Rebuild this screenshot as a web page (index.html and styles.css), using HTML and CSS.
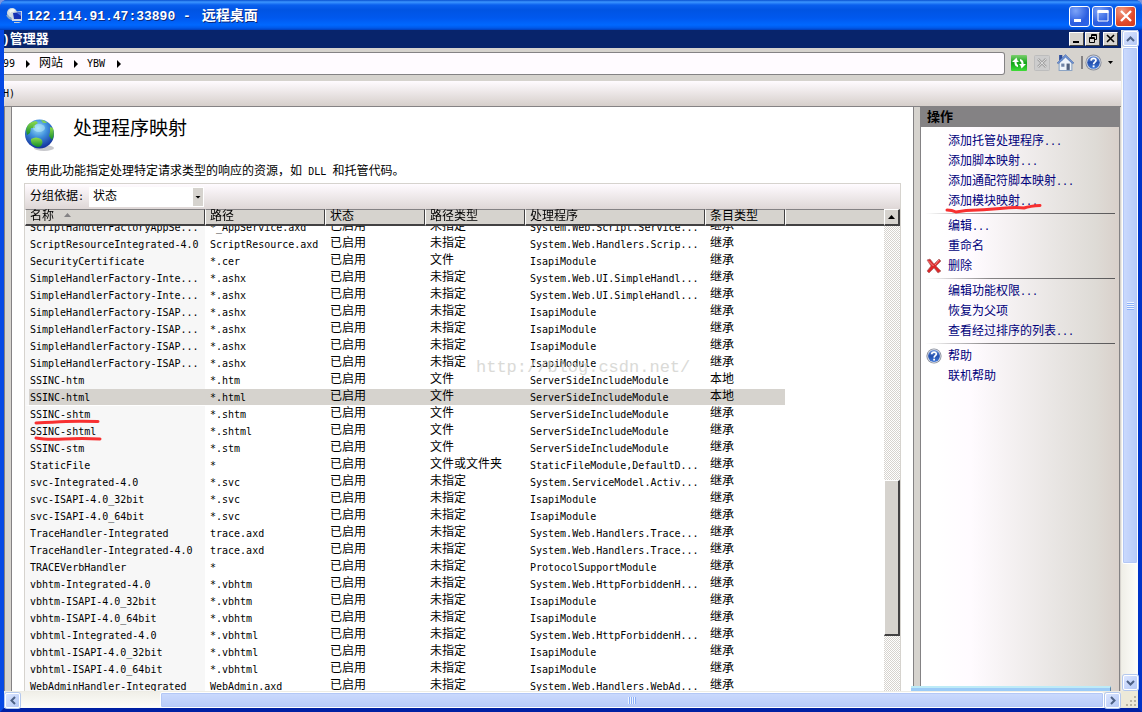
FILE: index.html
```html
<!DOCTYPE html>
<html lang="zh-CN">
<head>
<meta charset="utf-8">
<title>122.114.91.47:33890 - 远程桌面</title>
<link rel="stylesheet" href="styles.css">
</head>
<body>
<svg class="defs" width="0" height="0" aria-hidden="true">
  <defs>
    <radialGradient id="globeFill" cx="0.45" cy="0.3" r="0.7"><stop offset="0" stop-color="#9fe2f8"/><stop offset="0.45" stop-color="#3f8fdc"/><stop offset="1" stop-color="#12309c"/></radialGradient>
    <linearGradient id="landFill" x1="0" y1="0" x2="0" y2="1"><stop offset="0" stop-color="#8fdc4e"/><stop offset="1" stop-color="#128c28"/></linearGradient>
    <linearGradient id="helpFill" x1="0" y1="0" x2="0" y2="1"><stop offset="0" stop-color="#6d94dc"/><stop offset="0.5" stop-color="#2450ae"/><stop offset="1" stop-color="#3f78d8"/></linearGradient>
    <linearGradient id="goFill" x1="0" y1="0" x2="0" y2="1"><stop offset="0" stop-color="#7ccf6e"/><stop offset="0.5" stop-color="#12a418"/><stop offset="1" stop-color="#3fdc38"/></linearGradient>
    <symbol id="help" viewBox="0 0 16 16"><circle cx="8" cy="8" r="7.6" fill="#8a8f9c"/><circle cx="8" cy="8" r="6.7" fill="#dfe3ec"/><circle cx="8" cy="8" r="5.9" fill="url(#helpFill)"/><path d="M5.7 6.2C5.9 3.4 10.4 3.5 10.3 6.1C10.2 7.7 8.2 7.7 8.1 9.6" fill="none" stroke="#fff" stroke-width="1.7"/><rect x="7.2" y="10.7" width="1.8" height="1.8" fill="#fff"/></symbol>
  </defs>
</svg>
<div class="window">
  <header class="titlebar">
    <svg class="rdp" width="18" height="18" viewBox="0 0 18 18" aria-hidden="true"><circle cx="6" cy="6" r="5" fill="#d4dce0"/><path d="M3 4Q6 0 9 3L6 8Z" fill="#f4f8f6"/><path d="M1 8Q4 13 8 12" fill="none" stroke="#87a7c4" stroke-width="2"/><path d="M5 5L16 4V14L6 14Z" fill="#cfd8e4"/><path d="M7 6L15 5V12L8 12Z" fill="#1632b4"/><path d="M11 6L15 5V9Z" fill="#4d78e8"/><path d="M8 15H13L15 16H8Z" fill="#c3ccd6"/></svg>
    <h1 class="title">122.114.91.47:33890 - <span class="title-zh">远程桌面</span></h1>
    <div class="controls">
      <button class="xp" aria-label="最小化"><svg width="20" height="20" viewBox="0 0 20 20"><rect x="4" y="13" width="7" height="3" fill="#fff"/></svg></button>
      <button class="xp" aria-label="最大化"><svg width="20" height="20" viewBox="0 0 20 20"><path d="M5 5H15V15H5Z" fill="none" stroke="#fff"/><rect x="4.500" y="4" width="11" height="3" fill="#fff"/></svg></button>
      <button class="xp close" aria-label="关闭"><svg width="20" height="20" viewBox="0 0 20 20"><path d="M5 5L15 15M15 5L5 15" stroke="#fff" stroke-width="2.300"/></svg></button>
    </div>
  </header>
  <div class="viewport">
    <div class="remote">
      <div class="apptitle">
        <h2 class="appname">)管理器</h2>
        <div class="appbtns">
          <button class="classic" aria-label="最小化"><svg width="14" height="12"><rect x="3" y="8" width="6" height="2"/></svg></button>
          <button class="classic" aria-label="还原"><svg width="14" height="12"><path d="M5.500 4V1.500H10.500V6.500H9M5 2.500H11M3.500 4.500H8.500V9.500H3.500ZM3 5.500H9" fill="none" stroke="#000"/></svg></button>
          <button class="classic last" aria-label="关闭"><svg width="14" height="12"><path d="M3 2L10 9M10 2L3 9" stroke="#000" stroke-width="1.600"/></svg></button>
        </div>
      </div>
      <div class="addressrow">
        <nav class="address"><span class="lat">99</span><i class="crumb"></i><a href="#">网站</a><i class="crumb"></i><a href="#" class="lat">YBW</a><i class="crumb"></i></nav>
        <div class="tools">
          <button class="tool" aria-label="刷新"><svg width="16" height="16" viewBox="0 0 16 16"><rect width="16" height="16" rx="1" fill="url(#goFill)"/><path d="M5.500 2.500L1 7H3.500V8.500Q4 11.500 7 12V10Q5.500 9.500 5.500 7H8L6.500 5.500ZM10.500 13.500L15 9H12.500V7.500Q12 4.500 9 4V6Q10.500 6.500 10.500 9H8L9.500 10.500Z" fill="#fff"/></svg></button>
          <button class="tool" aria-label="停止" disabled><svg width="16" height="16" viewBox="0 0 16 16"><rect x=".5" y=".5" width="15" height="15" rx="1" fill="#cdcdcd" stroke="#bdbdbd"/><path d="M4 4L12 12M12 4L4 12" stroke="#a5a5a5" stroke-width="2.500"/><path d="M4 4L12 12M12 4L4 12" stroke="#d8d8d8"/></svg></button>
          <button class="tool" aria-label="主页"><svg width="17" height="17" viewBox="0 0 16 16"><path d="M2 8L8 2L14 8V15.500H2Z" fill="#eef3fa" stroke="#8ca4c4"/><path d="M2 1H5V6H2Z" fill="#2b4d9e"/><path d="M0 8.500L8 .5L16 8.500L14.500 9L8 3L1.500 9Z" fill="#6f94d4" stroke="#4568a8" stroke-width=".5"/><rect x="4" y="9" width="3" height="3" fill="#6f83a6"/><rect x="9" y="9" width="3" height="6" fill="#52617e"/></svg></button>
          <i class="toolsep"></i>
          <button class="tool help" aria-label="帮助"><svg width="17" height="17"><use href="#help"/></svg><svg class="caret" width="5" height="3"><path d="M0 0H5L2.500 3Z"/></svg></button>
        </div>
      </div>
      <div class="menubar"><button class="menu"><span class="lat">H)</span></button></div>
      <div class="panes">
        <div class="treeedge"></div>
        <main class="feature">
          <div class="heading">
            <svg width="32" height="34" viewBox="0 0 32 34" aria-hidden="true"><ellipse cx="20" cy="30" rx="10" ry="3" fill="#c8c8cc"/><circle cx="15.500" cy="16" r="14.500" fill="url(#globeFill)"/><path d="M2 12Q3 4 12 3L14 5L11 7L11 10L7 10L6 15L3 17Z" fill="url(#landFill)"/><path d="M7 21Q12 18 17 21Q20 24 17 28Q14 30 11 28Q6 26 7 21Z" fill="url(#landFill)"/><path d="M26 9L29 10Q31 17 28 22L25 18L26 14Z" fill="url(#landFill)"/><path d="M17 2Q21 2 23 5L19 5Z" fill="#7fd05c"/><ellipse cx="15" cy="10" rx="6" ry="4" fill="#c8f2ff" opacity=".45"/></svg>
            <h2>处理程序映射</h2>
          </div>
          <p class="intro">使用此功能指定处理特定请求类型的响应的资源，如 <span class="lat">DLL</span> 和托管代码。</p>
          <div class="listbox">
            <div class="groupbar">
              <label for="group">分组依据<span class="lat">:</span></label>
              <span class="picker"><select id="group"><option>状态</option></select><svg class="pickarrow" width="10" height="18"><path d="M2.500 8H7.500L5 10.500Z"/></svg></span>
            </div>
            <div class="listbody">
              <div class="rows" id="rows">
                <table>
                  <colgroup><col class="c-name"><col class="c-path"><col class="c-state"><col class="c-state"><col class="c-name"><col class="c-kind"><col></colgroup>
                  <thead><tr><th>名称<svg class="sort" width="7" height="4"><path d="M3.500 0L7 4H0Z" fill="#848284"/></svg></th><th>路径</th><th>状态</th><th>路径类型</th><th>处理程序</th><th>条目类型</th><th></th></tr></thead>
                  <tbody>
                    <tr><td>ScriptHandlerFactoryAppSe...</td><td>*_AppService.axd</td><td>已启用</td><td>未指定</td><td>System.Web.Script.Service...</td><td>继承</td><td></td></tr>
                    <tr><td>ScriptResourceIntegrated-4.0</td><td>ScriptResource.axd</td><td>已启用</td><td>未指定</td><td>System.Web.Handlers.Scrip...</td><td>继承</td><td></td></tr>
                    <tr><td>SecurityCertificate</td><td>*.cer</td><td>已启用</td><td>文件</td><td>IsapiModule</td><td>继承</td><td></td></tr>
                    <tr><td>SimpleHandlerFactory-Inte...</td><td>*.ashx</td><td>已启用</td><td>未指定</td><td>System.Web.UI.SimpleHandl...</td><td>继承</td><td></td></tr>
                    <tr><td>SimpleHandlerFactory-Inte...</td><td>*.ashx</td><td>已启用</td><td>未指定</td><td>System.Web.UI.SimpleHandl...</td><td>继承</td><td></td></tr>
                    <tr><td>SimpleHandlerFactory-ISAP...</td><td>*.ashx</td><td>已启用</td><td>未指定</td><td>IsapiModule</td><td>继承</td><td></td></tr>
                    <tr><td>SimpleHandlerFactory-ISAP...</td><td>*.ashx</td><td>已启用</td><td>未指定</td><td>IsapiModule</td><td>继承</td><td></td></tr>
                    <tr><td>SimpleHandlerFactory-ISAP...</td><td>*.ashx</td><td>已启用</td><td>未指定</td><td>IsapiModule</td><td>继承</td><td></td></tr>
                    <tr><td>SimpleHandlerFactory-ISAP...</td><td>*.ashx</td><td>已启用</td><td>未指定</td><td>IsapiModule</td><td>继承</td><td></td></tr>
                    <tr><td>SSINC-htm</td><td>*.htm</td><td>已启用</td><td>文件</td><td>ServerSideIncludeModule</td><td>本地</td><td></td></tr>
                    <tr class="selected"><td>SSINC-html</td><td>*.html</td><td>已启用</td><td>文件</td><td>ServerSideIncludeModule</td><td>本地</td><td></td></tr>
                    <tr><td><span class="marked">SSINC-shtm<svg class="mark" width="68" height="6"><path d="M2 4Q20 3 32 2.500T64 2.500" fill="none" stroke="#f83030" stroke-width="3" stroke-linecap="round"/></svg></span></td><td>*.shtm</td><td>已启用</td><td>文件</td><td>ServerSideIncludeModule</td><td>继承</td><td></td></tr>
                    <tr><td><span class="marked">SSINC-shtml<svg class="mark" width="70" height="6"><path d="M2 2Q12 4 30 3T66 3" fill="none" stroke="#f83030" stroke-width="3" stroke-linecap="round"/></svg></span></td><td>*.shtml</td><td>已启用</td><td>文件</td><td>ServerSideIncludeModule</td><td>继承</td><td></td></tr>
                    <tr><td>SSINC-stm</td><td>*.stm</td><td>已启用</td><td>文件</td><td>ServerSideIncludeModule</td><td>继承</td><td></td></tr>
                    <tr><td>StaticFile</td><td>*</td><td>已启用</td><td>文件或文件夹</td><td>StaticFileModule,DefaultD...</td><td>继承</td><td></td></tr>
                    <tr><td>svc-Integrated-4.0</td><td>*.svc</td><td>已启用</td><td>未指定</td><td>System.ServiceModel.Activ...</td><td>继承</td><td></td></tr>
                    <tr><td>svc-ISAPI-4.0_32bit</td><td>*.svc</td><td>已启用</td><td>未指定</td><td>IsapiModule</td><td>继承</td><td></td></tr>
                    <tr><td>svc-ISAPI-4.0_64bit</td><td>*.svc</td><td>已启用</td><td>未指定</td><td>IsapiModule</td><td>继承</td><td></td></tr>
                    <tr><td>TraceHandler-Integrated</td><td>trace.axd</td><td>已启用</td><td>未指定</td><td>System.Web.Handlers.Trace...</td><td>继承</td><td></td></tr>
                    <tr><td>TraceHandler-Integrated-4.0</td><td>trace.axd</td><td>已启用</td><td>未指定</td><td>System.Web.Handlers.Trace...</td><td>继承</td><td></td></tr>
                    <tr><td>TRACEVerbHandler</td><td>*</td><td>已启用</td><td>未指定</td><td>ProtocolSupportModule</td><td>继承</td><td></td></tr>
                    <tr><td>vbhtm-Integrated-4.0</td><td>*.vbhtm</td><td>已启用</td><td>未指定</td><td>System.Web.HttpForbiddenH...</td><td>继承</td><td></td></tr>
                    <tr><td>vbhtm-ISAPI-4.0_32bit</td><td>*.vbhtm</td><td>已启用</td><td>未指定</td><td>IsapiModule</td><td>继承</td><td></td></tr>
                    <tr><td>vbhtm-ISAPI-4.0_64bit</td><td>*.vbhtm</td><td>已启用</td><td>未指定</td><td>IsapiModule</td><td>继承</td><td></td></tr>
                    <tr><td>vbhtml-Integrated-4.0</td><td>*.vbhtml</td><td>已启用</td><td>未指定</td><td>System.Web.HttpForbiddenH...</td><td>继承</td><td></td></tr>
                    <tr><td>vbhtml-ISAPI-4.0_32bit</td><td>*.vbhtml</td><td>已启用</td><td>未指定</td><td>IsapiModule</td><td>继承</td><td></td></tr>
                    <tr><td>vbhtml-ISAPI-4.0_64bit</td><td>*.vbhtml</td><td>已启用</td><td>未指定</td><td>IsapiModule</td><td>继承</td><td></td></tr>
                    <tr><td>WebAdminHandler-Integrated</td><td>WebAdmin.axd</td><td>已启用</td><td>未指定</td><td>System.Web.Handlers.WebAd...</td><td>继承</td><td></td></tr>
                  </tbody>
                </table>
              </div>
              <div class="listscroll">
                <button class="scrollup" aria-label="向上滚动"><svg width="7" height="4"><path d="M3.500 0L7 4H0Z"/></svg></button>
                <div class="trackabove"></div><div class="listthumb"></div><div class="trackbelow"></div>
              </div>
              <span class="watermark">http://blog.csdn.net/</span>
            </div>
          </div>
        </main>
        <div class="splitter"></div>
        <aside class="actions">
          <h3>操作</h3>
          <ul>
            <li><a href="#">添加托管处理程序<span class="lat">...</span></a></li>
            <li><a href="#">添加脚本映射<span class="lat">...</span></a></li>
            <li><a href="#">添加通配符脚本映射<span class="lat">...</span></a></li>
            <li><a href="#">添加模块映射<span class="lat">...</span></a><svg class="swoosh" width="100" height="12"><path d="M3 8Q8 8 12 10L22 8.500Q40 8 56 6.500T80 6Q86 4 96 3.500" fill="none" stroke="#f83030" stroke-width="3" stroke-linecap="round"/></svg></li>
          </ul>
          <hr>
          <ul>
            <li><a href="#">编辑<span class="lat">...</span></a></li>
            <li><a href="#">重命名</a></li>
            <li><svg class="actionicon" width="16" height="16" viewBox="0 0 16 16"><path d="M1 2L4 1L8 6L13 1L15 3L10 8L15 13L12 15L8 10L3 15L1 13L5 8Z" fill="#dc2828" stroke="#a06468" stroke-width=".6"/><path d="M2 2.500L7.500 8M13 2L9 7" stroke="#f88888"/></svg><a href="#">删除</a></li>
          </ul>
          <hr>
          <ul>
            <li><a href="#">编辑功能权限<span class="lat">...</span></a></li>
            <li><a href="#">恢复为父项</a></li>
            <li><a href="#">查看经过排序的列表<span class="lat">...</span></a></li>
          </ul>
          <hr>
          <ul>
            <li><svg class="actionicon" width="16" height="16"><use href="#help"/></svg><a href="#">帮助</a></li>
            <li><a href="#">联机帮助</a></li>
          </ul>
        </aside>
        <div class="ghost"></div>
      </div>
    </div>
    <div class="vscroll">
      <button class="sb" aria-label="向上"><svg width="9" height="6"><path d="M1 5L4.500 1.500L8 5" fill="none" stroke="#4d6185" stroke-width="2"/></svg></button>
      <div class="vthumb"><i class="vgrip"></i></div>
      <div class="vtrack"></div>
      <button class="sb" aria-label="向下"><svg width="9" height="6"><path d="M1 1L4.500 4.500L8 1" fill="none" stroke="#4d6185" stroke-width="2"/></svg></button>
    </div>
    <div class="hscroll">
      <button class="sb" aria-label="向左"><svg width="6" height="9"><path d="M5 1L1.500 4.500L5 8" fill="none" stroke="#4d6185" stroke-width="2"/></svg></button>
      <div class="htrack"></div>
      <div class="hthumb"><i class="hgrip"></i></div>
      <button class="sb" aria-label="向右"><svg width="6" height="9"><path d="M1 1L4.500 4.500L1 8" fill="none" stroke="#4d6185" stroke-width="2"/></svg></button>
    </div>
    <div class="corner"><svg width="12" height="12"><path d="M9 1h2v2h-2zM5 5h2v2h-2zM9 5h2v2h-2zM1 9h2v2h-2zM5 9h2v2h-2zM9 9h2v2h-2z" fill="#b8b4a3"/></svg></div>
  </div>
</div>
<script src="script.js"></script>
</body>
</html>
```

FILE: styles.css
```css
* { box-sizing: border-box; }
body { margin: 0; background: #7a96df; font: 12px/16px "Liberation Mono", "Noto Sans CJK SC", monospace; color: #000; }
h1, h2, h3, p, ul { margin: 0; padding: 0; }
ul { list-style: none; }
svg { display: block; flex: none; }
button { margin: 0; padding: 0; border: 0; font: inherit; color: inherit; display: flex; align-items: center; justify-content: center; flex: none; }
a { color: inherit; text-decoration: none; }
.defs { position: absolute; }
.lat { font-family: "DejaVu Sans Mono", monospace; font-size: 10px; }

.window { height: 100vh; display: flex; flex-direction: column; border-radius: 7px 7px 0 0; overflow: hidden; background: #0040dc; }
.titlebar { height: 30px; flex: none; display: flex; align-items: center; gap: 3px; padding: 2px 6px 0; background: linear-gradient(#0850d0 0, #3c96ff 2px, #0a60ee 5px, #0054e3 10px, #0058ee 18px, #0068ff 25px, #0058e8 28px, #003fbe 30px); }
.title { flex: 1; font: bold 13px/20px "Liberation Mono", "Noto Sans CJK SC", monospace; color: #fff; text-shadow: 1px 1px #0a2a80; white-space: pre; }
.title-zh { font-size: 14px; margin-left: 3px; }
.controls { display: flex; gap: 2px; }
.xp { width: 21px; height: 21px; border: 1px solid #fff; border-radius: 3px; background: radial-gradient(circle at 30% 20%, #7da4f8, #2c5ee0 60%, #2a66ec); }
.close { background: radial-gradient(circle at 30% 20%, #f09a80, #e0492a 60%, #cf3b1c); }

.viewport { flex: 1; min-height: 0; display: grid; grid-template-columns: minmax(0, 1fr) 17px; grid-template-rows: minmax(0, 1fr) 17px; border: solid; border-width: 0 4px 4px; border-color: #0040dc #0034c8 #0020a4 #0648e4; }
.remote { min-width: 0; min-height: 0; display: flex; flex-direction: column; background: #d6d3ce; overflow: hidden; }
.apptitle { height: 18px; flex: none; display: flex; justify-content: space-between; background: #08246b; padding-right: 3px; }
.appname { font-size: 13px; line-height: 19px; color: #fff; margin-left: -2px; }
.appbtns { display: flex; align-items: center; gap: 1px; }
.classic { width: 15px; height: 14px; background: #d6d3ce; border: 1px solid; border-color: #fff #404040 #404040 #fff; }
.classic.last { margin-left: 2px; }

.addressrow { height: 33px; flex: none; display: flex; align-items: center; padding-bottom: 2px; }
.address { flex: 1; height: 23px; display: flex; align-items: center; background: #fffbff; border: 1px solid #848284; border-left: 0; border-radius: 0 3px 3px 0; overflow: hidden; }
.address .lat:first-child { margin-left: -1px; }
.crumb { margin: 0 9px 0 11px; border: solid transparent; border-width: 4px 0 4px 4px; border-left-color: #000; }
.crumb:last-child { margin-left: 12px; }
.tools { display: flex; align-items: center; gap: 7px; padding: 0 8px 2px 6px; }
.tool { background: none; }
.toolsep { width: 2px; height: 13px; background: #848284; }
.help { gap: 6px; margin-left: -5px; }
.menubar { height: 25px; flex: none; display: flex; align-items: center; background: linear-gradient(#fffbff, #d6cfcb); }
.menu { background: none; margin-left: -1px; }

.panes { flex: 1; min-height: 0; position: relative; display: flex; border-top: 1px solid #848284; }
.treeedge { width: 8px; flex: none; border: solid #848284; border-width: 0 1px; }
.feature { flex: 1; min-width: 0; display: flex; flex-direction: column; background: #fff; padding: 11px 12px 0; }
.heading { display: flex; gap: 17px; }
.heading h2 { font-size: 19px; line-height: 24px; font-weight: 400; }
.intro { margin: 11px 2px 2px; line-height: 18px; white-space: nowrap; }
.intro .lat { margin: 0 -1px; }
.listbox { flex: 1; min-height: 0; display: flex; flex-direction: column; border: solid #d6d3ce; border-width: 1px 1px 0; }
.groupbar { height: 25px; flex: none; display: flex; align-items: center; gap: 1px; padding-left: 5px; background: linear-gradient(#fffbff, #ded7d6); }
.picker { position: relative; width: 115px; height: 20px; background: #fff; border: 1px solid #fff; margin-left: 4px; }
.picker select { appearance: none; width: 100%; height: 18px; border: 0; background: transparent; padding: 0 3px; font: inherit; color: inherit; }
.pickarrow { position: absolute; right: 0; top: 0; background: #d6d3ce; pointer-events: none; }
.listbody { flex: 1; min-height: 0; position: relative; display: flex; }
.rows { flex: 1; min-width: 0; overflow: hidden; }
table { width: 100%; table-layout: fixed; border-spacing: 0; }
.c-name { width: 180px; }
.c-path { width: 120px; }
.c-state { width: 100px; }
.c-kind { width: 80px; }
th { position: sticky; top: 0; z-index: 1; height: 17px; padding: 1px 4px 0; text-align: left; font-weight: 400; line-height: 13px; background: #d6d3ce; border: solid; border-width: 1px 1px 2px 1px; border-color: #848284 #424142 #424142 #fff; white-space: nowrap; }
th:last-child { border-right: 0; }
.sort { display: inline-block; margin: 0 0 3px 10px; }
td { height: 17px; padding: 1px 0 0 5px; line-height: 15px; white-space: nowrap; border-bottom: 1px solid transparent; background-clip: padding-box; }
td:nth-child(1), td:nth-child(2), td:nth-child(5) { font-family: "DejaVu Sans Mono", monospace; font-size: 10px; }
td:first-child { background: #f7f7f7; background-clip: border-box; }
.selected td:not(:last-child) { background-color: #d6d3ce; background-clip: padding-box; }
.selected td:first-child { border-left: 4px solid #f7f7f7; padding-left: 1px; }
.marked { position: relative; }
.mark { position: absolute; left: 4px; top: 10px; }
.listscroll { width: 16px; flex: none; display: flex; flex-direction: column; background: repeating-conic-gradient(#d6d3ce 0 25%, #fff 0 50%) 0 0 / 2px 2px; }
.scrollup { height: 17px; background: #d6d3ce; border: solid; border-width: 1px 2px 2px 1px; border-color: #fff #424142 #424142 #fff; }
.trackabove { flex: 256; }
.listthumb { flex: 155; background: #d6d3ce; border: solid; border-width: 1px 2px 2px 1px; border-color: #fff #424142 #424142 #fff; }
.trackbelow { flex: 55; }
.watermark { position: absolute; left: 451px; top: 148px; font: 17px/22px "Liberation Mono", monospace; color: #d2d2ce; opacity: .8; white-space: nowrap; pointer-events: none; }

.splitter { width: 8px; flex: none; border: solid #848284; border-width: 0 1px; }
.actions { width: 199px; flex: none; color: #00007b; background: linear-gradient(90deg, #fff 8%, #fffbff 25%, #dedbd6 88%, #d9d0ca); border-right: 1px solid #848284; margin-right: 1px; }
.actions h3 { height: 20px; line-height: 21px; padding-left: 6px; font-size: 13px; color: #000; background: #848284; margin-bottom: 4px; }
.actions li { position: relative; height: 20px; line-height: 22px; padding-left: 27px; white-space: nowrap; }
.actions hr { height: 1px; border: 0; margin: 2px 4px 2px 4px; background: linear-gradient(90deg, transparent, #848284 35%, #5a595a); }
.actionicon { position: absolute; left: 5px; top: 2px; }
.swoosh { position: absolute; left: 23px; top: 11px; z-index: 1; }
.ghost { position: absolute; right: 10px; bottom: 0; width: 200px; height: 5px; border-top: 2px solid #bdebf7; border-right: 1px solid #5a82a5; background: #9ccbf7; }

.sb { width: 15px; height: 15px; border: 1px solid #fff; border-radius: 2px; background: linear-gradient(135deg, #dbe5ff, #b4c8f6); box-shadow: 0 0 0 1px #b4c8ee; margin: 1px; }
.vscroll { display: flex; flex-direction: column; background: linear-gradient(90deg, #f0efe8, #fefefa); border-left: 1px solid #eeede5; min-height: 0; }
.vthumb { flex: 517; display: flex; align-items: center; justify-content: center; border: 1px solid #fff; border-radius: 2px; background: linear-gradient(90deg, #cbdafd, #b8cbf9); box-shadow: inset 0 0 0 1px #b4c8f6; }
.vtrack { flex: 110; }
.vgrip { width: 7px; height: 8px; background: repeating-linear-gradient(#eef4fe 0 1px, #8cb0f8 1px 2px); }
.hscroll { display: flex; background: linear-gradient(#f0efe8, #fefefa); border-top: 1px solid #eeede5; min-width: 0; }
.htrack { flex: 139; }
.hthumb { flex: 943; display: flex; align-items: center; justify-content: center; border: 1px solid #fff; border-radius: 2px; background: linear-gradient(#cbdafd, #b8cbf9); box-shadow: inset 0 0 0 1px #b4c8f6; }
.hgrip { width: 8px; height: 7px; background: repeating-linear-gradient(90deg, #eef4fe 0 1px, #8cb0f8 1px 2px); }
.corner { background: #ece9d8; display: flex; align-items: flex-end; justify-content: flex-end; padding: 1px; }
```

FILE: script.js
```js
// The list opens scrolled part-way into its first row.
document.getElementById("rows").scrollTop = 7;
```
